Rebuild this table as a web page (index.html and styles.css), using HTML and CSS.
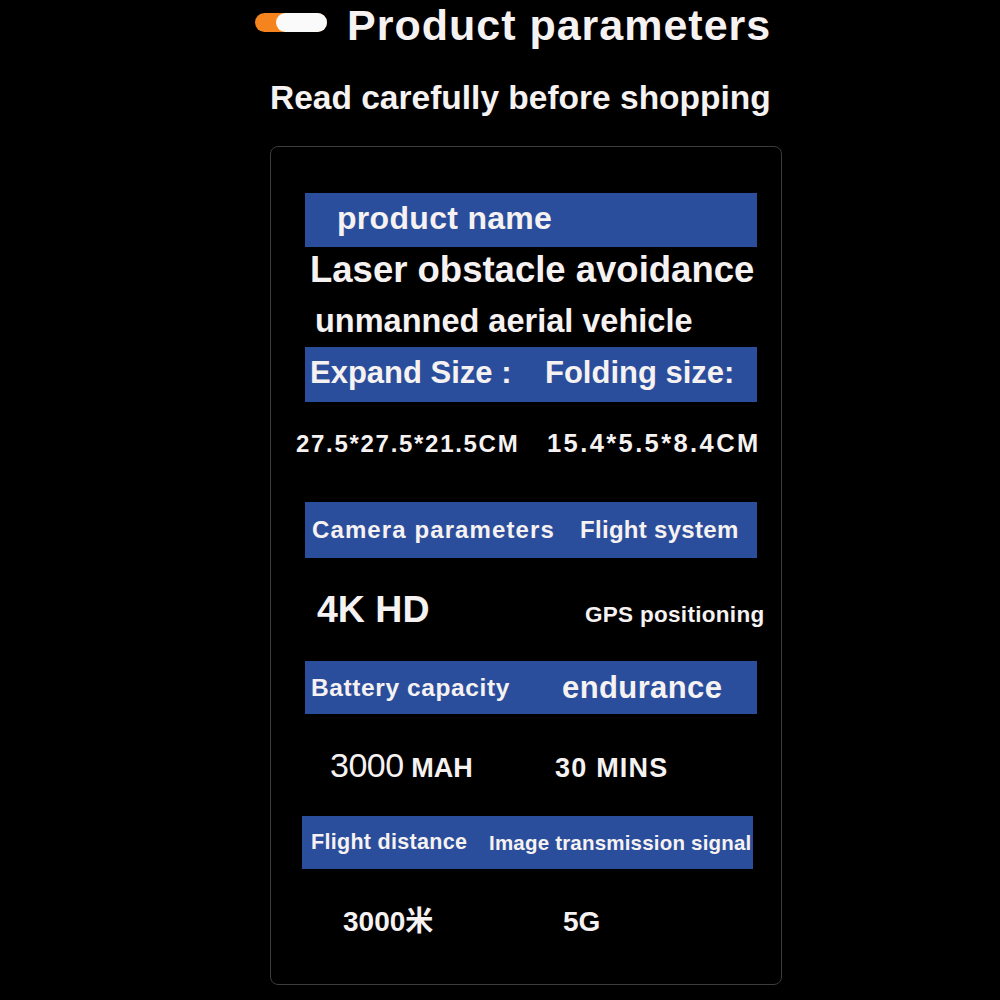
FILE: index.html
```html
<!DOCTYPE html>
<html lang="en">
<head>
    <meta charset="UTF-8">
    <meta name="viewport" content="width=device-width, initial-scale=1.0">
    <title>Product parameters</title>
    <link rel="stylesheet" href="styles.css">
</head>
<body>

    <div class="page">
        <!-- タイトル -->
        <div class="title-row">
            <span class="pill"></span>
            <h1 class="title">Product parameters</h1>
        </div>
        <p class="subtitle">Read carefully before shopping</p>

        <!-- パラメータ表 -->
        <div class="card">
            <div class="bar bar-name">
                <span class="cell">product name</span>
            </div>
            <div class="name-block">
                <div class="name-line1">Laser obstacle avoidance</div>
                <div class="name-line2">unmanned aerial vehicle</div>
            </div>

            <div class="bar bar-size">
                <span class="cell">Expand Size :</span>
                <span class="cell">Folding size:</span>
            </div>
            <div class="row row-size">
                <span class="cell">27.5*27.5*21.5CM</span>
                <span class="cell">15.4*5.5*8.4CM</span>
            </div>

            <div class="bar bar-camera">
                <span class="cell">Camera parameters</span>
                <span class="cell">Flight system</span>
            </div>
            <div class="row row-camera">
                <span class="cell">4K HD</span>
                <span class="cell">GPS positioning</span>
            </div>

            <div class="bar bar-battery">
                <span class="cell">Battery capacity</span>
                <span class="cell">endurance</span>
            </div>
            <div class="row row-battery">
                <span class="cell"><span class="thin">3000</span> MAH</span>
                <span class="cell">30 MINS</span>
            </div>

            <div class="bar bar-distance">
                <span class="cell">Flight distance</span>
                <span class="cell">Image transmission signal</span>
            </div>
            <div class="row row-distance">
                <span class="cell">3000米</span>
                <span class="cell">5G</span>
            </div>
        </div>
    </div>

</body>
</html>
```

FILE: styles.css
```css
/* ページ全体 */
body {
    margin: 0;
    padding: 0;
    background-color: #000;
    color: #f6f2f2;
    font-family: "Liberation Sans", Arial, "Noto Sans CJK SC", sans-serif;
    font-weight: bold;
}

.page {
    width: 530px;
    margin-left: 255px;
}

/* タイトル */
.title-row {
    display: flex;
    height: 50px;
}

.pill {
    display: flex;
    justify-content: flex-end;
    width: 72px;
    height: 19px;
    margin-top: 13px;
    margin-right: 20px;
    border-radius: 10px;
    background-color: #f5841f;
}

.pill::after {
    content: '';
    width: 51px;
    height: 100%;
    border-radius: 10px;
    background-color: #fafafa;
}

.title {
    margin: 0;
    font-size: 43px;
    line-height: 50px;
    letter-spacing: 1px;
}

.subtitle {
    margin: 28px 0 0 15px;
    font-size: 33.5px;
    line-height: 40px;
}

/* パラメータ表 */
.card {
    margin: 28px 0 0 15px;
    width: 512px;
    box-sizing: border-box;
    padding: 46px 24px 0 34px;
    border: 1px solid #3c3c3c;
    border-radius: 8px;
}

.bar,
.row {
    display: flex;
    white-space: nowrap;
}

.bar {
    align-items: center;
    background-color: #2b4e9c;
}

.row {
    align-items: baseline;
    box-sizing: border-box;
}

.cell {
    flex: none;
}

/* product name */
.bar-name {
    height: 54px;
    padding-bottom: 4px;
    box-sizing: border-box;
    font-size: 32px;
}

.bar-name .cell {
    margin-left: 32px;
    letter-spacing: 0.3px;
}

.name-block {
    height: 100px;
    padding-top: 1px;
    box-sizing: border-box;
}

.name-line1 {
    margin-left: 5px;
    font-size: 36.5px;
    line-height: 44px;
}

.name-line2 {
    margin: 9px 0 0 10px;
    font-size: 32.5px;
    line-height: 40px;
}

/* サイズ */
.bar-size {
    height: 55px;
    padding-bottom: 3px;
    box-sizing: border-box;
    font-size: 31px;
}

.bar-size .cell:first-child {
    margin-left: 5px;
    width: 235px;
}

.row-size {
    height: 100px;
    padding-top: 26px;
    font-size: 24px;
    line-height: 30px;
}

.row-size .cell:first-child {
    margin-left: -9px;
    width: 251px;
    letter-spacing: 1.7px;
}

.row-size .cell:last-child {
    font-size: 25.5px;
    letter-spacing: 2.4px;
}

/* カメラ */
.bar-camera {
    height: 56px;
    font-size: 24px;
    letter-spacing: 1.1px;
}

.bar-camera .cell:first-child {
    margin-left: 7px;
    width: 268px;
}

.bar-camera .cell:last-child {
    letter-spacing: 0.3px;
}

.row-camera {
    height: 103px;
    padding-top: 29px;
    line-height: 44px;
}

.row-camera .cell:first-child {
    margin-left: 12px;
    width: 268px;
    font-size: 37.5px;
}

.row-camera .cell:last-child {
    font-size: 22.5px;
    letter-spacing: 0.3px;
}

/* バッテリー */
.bar-battery {
    height: 53px;
    font-size: 24.5px;
    letter-spacing: 0.6px;
}

.bar-battery .cell:first-child {
    margin-left: 6px;
    width: 251px;
}

.bar-battery .cell:last-child {
    font-size: 31px;
    letter-spacing: 0.4px;
}

.row-battery {
    height: 102px;
    padding-top: 31px;
    font-size: 27px;
    line-height: 40px;
}

.row-battery .cell:first-child {
    margin-left: 25px;
    width: 225px;
}

.row-battery .cell:last-child {
    letter-spacing: 1.2px;
}

.thin {
    font-weight: normal;
    font-size: 34px;
    letter-spacing: -0.5px;
}

/* 飛行距離 */
.bar-distance {
    height: 53px;
    width: 451px;
    margin-left: -3px;
    font-size: 21.5px;
    letter-spacing: 0.3px;
}

.bar-distance .cell:first-child {
    margin-left: 9px;
    width: 178px;
}

.bar-distance .cell:last-child {
    font-size: 20.5px;
    letter-spacing: 0.2px;
}

.row-distance {
    height: 115px;
    padding-top: 36px;
    font-size: 28px;
    line-height: 34px;
}

.row-distance .cell:first-child {
    margin-left: 38px;
    width: 220px;
}
```
